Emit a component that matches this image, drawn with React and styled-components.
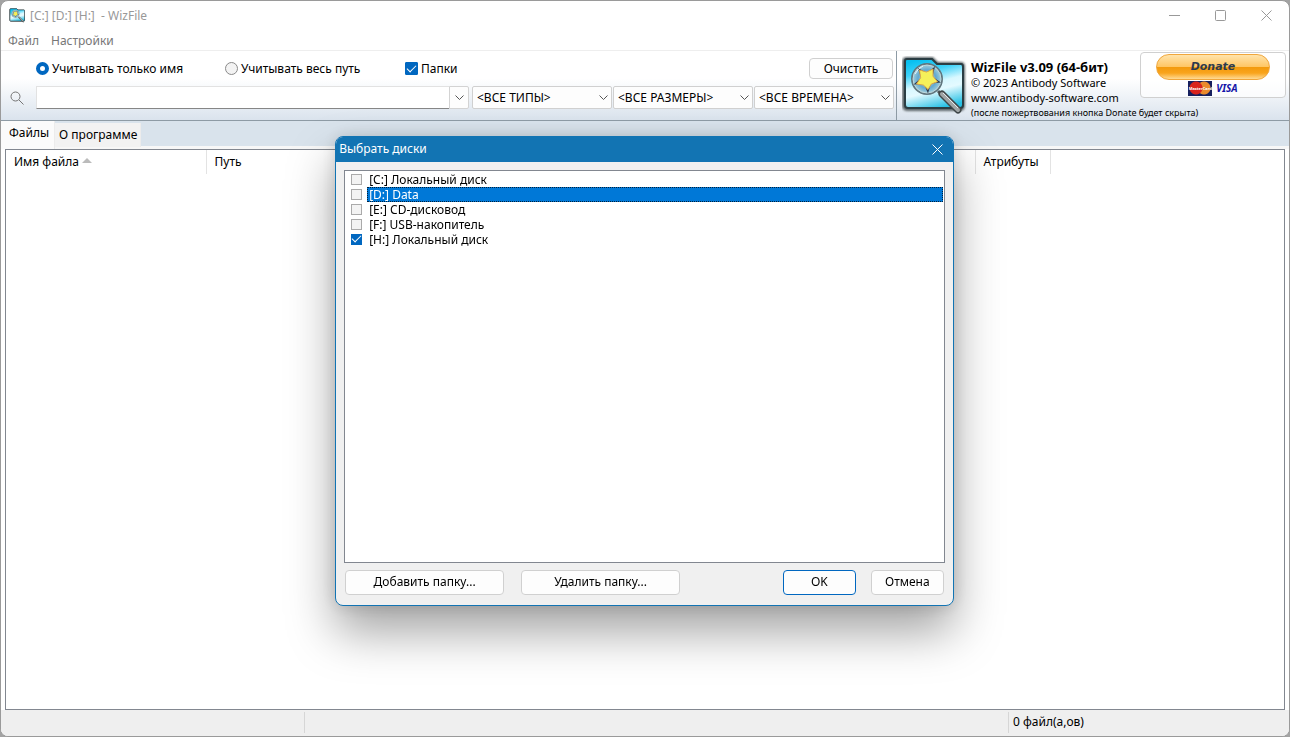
import React, { useState } from "react";
import styled, { createGlobalStyle } from "styled-components";

const FILTERS = [
  { id: "types", label: "Типы", value: "<ВСЕ ТИПЫ>" },
  { id: "sizes", label: "Размеры", value: "<ВСЕ РАЗМЕРЫ>" },
  { id: "times", label: "Времена", value: "<ВСЕ ВРЕМЕНА>" },
];

const DRIVES = [
  { id: "C", name: "[C:] Локальный диск" },
  { id: "D", name: "[D:] Data" },
  { id: "E", name: "[E:] CD-дисковод" },
  { id: "F", name: "[F:] USB-накопитель" },
  { id: "H", name: "[H:] Локальный диск" },
];

function FolderLogo({ width, height }) {
  return (
    <svg width={width} height={height} viewBox="0 0 66 60" aria-hidden="true">
      <defs>
        <linearGradient id="folder" x1="0.3" y1="0" x2="0.6" y2="1">
          <stop offset="0" stopColor="#08c0f0" />
          <stop offset="0.25" stopColor="#3fd2f8" />
          <stop offset="0.5" stopColor="#d8f8ff" />
          <stop offset="0.65" stopColor="#e4faff" />
          <stop offset="1" stopColor="#27c0e4" />
        </linearGradient>
        <radialGradient id="lens">
          <stop offset="0" stopColor="#cfeaf2" />
          <stop offset="0.6" stopColor="#62a8d0" />
          <stop offset="1" stopColor="#a9d3dc" />
        </radialGradient>
        <filter id="soft" x="-10%" y="-10%" width="120%" height="120%">
          <feGaussianBlur stdDeviation="1" />
        </filter>
      </defs>
      <path d="M5 3h25l5 5h24q2 0 2 3v38q0 4-3 4H6q-4 0-4-4V6q0-3 3-3z" fill="none" stroke="#5f686b" strokeWidth="4" filter="url(#soft)" />
      <path d="M5 3h25l5 5h24q2 0 2 3v38q0 3-3 3H6q-3 0-3-3V5q0-2 2-2z" fill="url(#folder)" stroke="#2b3d43" strokeWidth="2" />
      <path d="M36 35l4 4" stroke="#50585a" strokeWidth="3" />
      <path d="M40 38l16 16" stroke="#3f4648" strokeWidth="7" strokeLinecap="round" />
      <path d="M40 38l16 16" stroke="#a0a5a6" strokeWidth="4" strokeLinecap="round" />
      <path d="M41 37l15 15" stroke="#e4e8e8" strokeWidth="1" />
      <circle cx="25" cy="23" r="15" fill="url(#lens)" stroke="#61767e" strokeWidth="2" />
      <circle cx="25" cy="23" r="14" fill="none" stroke="#bfd8dd" strokeWidth="1" />
      <path d="M26 37.5L21.9 28.1 11.5 28.5 19.2 21.7 15.5 11.5 24.5 17 33 10.5 30.5 20.7 39 26.5 28.9 27.5z" fill="#2f3c50" />
      <path d="M26 33.5L21.4 29.1 14.5 28 18.6 21.7 17.5 14 24.5 16 31 13 31 20.2 35.5 25.7 29.4 28z" fill="#f5f05a" stroke="#d8a54e" strokeWidth="1" strokeLinejoin="round" />
      <path d="M13 18q3-6 8-8" fill="none" stroke="#e6f8fc" strokeWidth="1" />
    </svg>
  );
}

function Chevron() {
  return (
    <ChevronIcon viewBox="0 0 9 5" aria-hidden="true">
      <path d="M.5.5l4 4 4-4" />
    </ChevronIcon>
  );
}

function App() {
  const [matchMode, setMatchMode] = useState("name");
  const [folders, setFolders] = useState(true);
  const [query, setQuery] = useState("");
  const [tab, setTab] = useState("files");
  const [dialogOpen, setDialogOpen] = useState(true);
  const [selected, setSelected] = useState("D");
  const [checked, setChecked] = useState(["H"]);

  const toggleDrive = (id) => {
    setSelected(id);
    setChecked((prev) =>
      prev.includes(id) ? prev.filter((item) => item !== id) : [...prev, id]
    );
  };

  return (
    <>
      <GlobalStyle />
      <Window>
        <TitleBar>
          <FolderLogo width={17} height={15} />
          <Title>[C:] [D:] [H:]&nbsp; - WizFile</Title>
          <WindowButton aria-label="Свернуть">
            <svg width="11" height="11" viewBox="0 0 11 11"><path d="M0 5.5h11" /></svg>
          </WindowButton>
          <WindowButton aria-label="Развернуть">
            <svg width="11" height="11" viewBox="0 0 11 11"><rect x=".5" y=".5" width="10" height="10" rx="1" /></svg>
          </WindowButton>
          <WindowButton aria-label="Закрыть">
            <svg width="11" height="11" viewBox="0 0 11 11"><path d="M.5.5l10 10M10.5.5l-10 10" /></svg>
          </WindowButton>
        </TitleBar>
        <Menu>
          <MenuItem>Файл</MenuItem>
          <MenuItem>Настройки</MenuItem>
        </Menu>

        <Toolbar>
          <SearchPanel>
            <OptionsRow>
              <Option $width="189px">
                <Radio name="match" checked={matchMode === "name"} onChange={() => setMatchMode("name")} />
                Учитывать только имя
              </Option>
              <Option $width="180px">
                <Radio name="match" checked={matchMode === "path"} onChange={() => setMatchMode("path")} />
                Учитывать весь путь
              </Option>
              <Option>
                <CheckBox checked={folders} onChange={() => setFolders(!folders)} />
                Папки
              </Option>
              <ClearButton onClick={() => setQuery("")}>Очистить</ClearButton>
            </OptionsRow>
            <SearchRow>
              <SearchIcon width="14" height="14" viewBox="0 0 14 14" aria-hidden="true">
                <circle cx="5.5" cy="5.5" r="4.5" />
                <path d="M9 9l4.5 4.5" />
              </SearchIcon>
              <SearchBox>
                <SearchInput aria-label="Поиск" value={query} onChange={(e) => setQuery(e.target.value)} />
                <HistoryButton aria-label="История поиска"><Chevron /></HistoryButton>
              </SearchBox>
              <Filters>
                {FILTERS.map((filter) => (
                  <SelectWrap key={filter.id}>
                    <Select aria-label={filter.label}>
                      <option>{filter.value}</option>
                    </Select>
                    <SelectArrow><Chevron /></SelectArrow>
                  </SelectWrap>
                ))}
              </Filters>
            </SearchRow>
          </SearchPanel>

          <AboutPanel>
            <FolderLogo width={66} height={60} />
            <AboutText>
              <ProductName>WizFile v3.09 (64-бит)</ProductName>
              <AboutLine>© 2023 Antibody Software</AboutLine>
              <AboutLink href="#site">www.antibody-software.com</AboutLink>
              <SmallNote>(после пожертвования кнопка Donate будет скрыта)</SmallNote>
            </AboutText>
            <DonateButton>
              <DonatePill>Donate</DonatePill>
              <Cards>
                <MasterCard>MasterCard</MasterCard>
                <Visa>VISA</Visa>
              </Cards>
            </DonateButton>
          </AboutPanel>
        </Toolbar>

        <Tabs role="tablist">
          <Tab role="tab" aria-selected={tab === "files"} $active={tab === "files"} onClick={() => setTab("files")}>
            Файлы
          </Tab>
          <Tab role="tab" aria-selected={tab === "about"} $active={tab === "about"} onClick={() => setTab("about")}>
            О программе
          </Tab>
        </Tabs>

        <FileList>
          <FileTable>
            <thead>
              <tr>
                <HeadCell $width="200px">Имя файла <SortMark /></HeadCell>
                <HeadCell>Путь</HeadCell>
                <HeadCell $width="75px">Атрибуты</HeadCell>
                <BlankCell />
              </tr>
            </thead>
          </FileTable>
        </FileList>

        <StatusBar>
          <StatusCell $width="299px" />
          <StatusCell $grow />
          <StatusCell $width="277px">0 файл(а,ов)</StatusCell>
        </StatusBar>
      </Window>

      {dialogOpen && (
        <Overlay>
          <Dialog role="dialog" aria-labelledby="dialog-title">
            <DialogHeader>
              <DialogTitle id="dialog-title">Выбрать диски</DialogTitle>
              <DialogClose aria-label="Закрыть" onClick={() => setDialogOpen(false)}>
                <svg width="11" height="11" viewBox="0 0 11 11"><path d="M.5.5l10 10M10.5.5l-10 10" /></svg>
              </DialogClose>
            </DialogHeader>
            <DriveList>
              {DRIVES.map((drive) => (
                <DriveRow key={drive.id}>
                  <CheckBox $small checked={checked.includes(drive.id)} onChange={() => toggleDrive(drive.id)} />
                  <DriveName $selected={drive.id === selected}>{drive.name}</DriveName>
                </DriveRow>
              ))}
            </DriveList>
            <DialogButtons>
              <DialogButton $width="159px">Добавить папку...</DialogButton>
              <DialogButton $width="159px">Удалить папку...</DialogButton>
              <ConfirmButtons>
                <DialogButton $width="73px" $primary onClick={() => setDialogOpen(false)}>OK</DialogButton>
                <DialogButton $width="73px" onClick={() => setDialogOpen(false)}>Отмена</DialogButton>
              </ConfirmButtons>
            </DialogButtons>
          </Dialog>
        </Overlay>
      )}
    </>
  );
}

export default App;


const GlobalStyle = createGlobalStyle`
  * {
    box-sizing: border-box;
  }
  body {
    margin: 0;
    background: #a3a3a3;
    color: #000;
    font-family: "Noto Sans", "Open Sans", sans-serif;
    font-size: 12px;
    line-height: 16px;
  }
  button, input, select {
    margin: 0;
    font: inherit;
    color: inherit;
  }
`;

const Window = styled.main`
  min-height: 100vh;
  display: flex;
  flex-direction: column;
  background: #fff;
  border: 1px solid #9a9a9a;
  border-radius: 8px;
  overflow: hidden;
`;

const TitleBar = styled.header`
  height: 29px;
  padding-left: 8px;
  display: flex;
  align-items: center;
  color: #999;
`;

const Title = styled.span`
  flex: 1;
  margin-left: 4px;
`;

const WindowButton = styled.button`
  width: 46px;
  height: 29px;
  display: flex;
  align-items: center;
  justify-content: center;
  border: 0;
  background: none;
  svg {
    fill: none;
    stroke: #999;
  }
`;

const Menu = styled.nav`
  height: 21px;
  padding: 2px 0 0 7px;
  display: flex;
  align-items: center;
  gap: 12px;
  border-bottom: 1px solid #eee;
`;

const MenuItem = styled.button`
  padding: 0;
  border: 0;
  background: none;
  color: #777;
`;

const Toolbar = styled.section`
  height: 70px;
  display: flex;
  background: linear-gradient(#fff 0%, #fff 40%, #dae3ed 100%);
  border-bottom: 1px solid #8e9ba5;
`;

const SearchPanel = styled.div`
  flex: 1;
  min-width: 0;
  padding: 7px 2px 0 0;
  border-right: 1px solid #8e9ba5;
`;

const OptionsRow = styled.div`
  display: flex;
  align-items: center;
  height: 21px;
  padding-left: 35px;
`;

const Option = styled.label`
  width: ${({ $width }) => $width || "auto"};
  display: flex;
  align-items: center;
  gap: 3px;
  white-space: nowrap;
`;

const Radio = styled.input.attrs({ type: "radio" })`
  appearance: none;
  width: 13px;
  height: 13px;
  border: 1px solid #8a8a8a;
  border-radius: 50%;
  background: #f3f3f3;
  &:checked {
    border: 4px solid #0067c0;
    background: #fff;
  }
`;

const CheckBox = styled.input.attrs({ type: "checkbox" })`
  appearance: none;
  flex: none;
  width: ${({ $small }) => ($small ? "11px" : "13px")};
  height: ${({ $small }) => ($small ? "11px" : "13px")};
  display: flex;
  align-items: center;
  justify-content: center;
  border: 1px solid ${({ $small }) => ($small ? "#aaa" : "#8a8a8a")};
  border-radius: ${({ $small }) => ($small ? "0" : "1px")};
  background: #f3f3f3;
  &:checked {
    border-color: #0067c0;
    background: #0067c0;
  }
  &:checked::after {
    content: "";
    width: 8px;
    height: 4px;
    margin-bottom: 3px;
    border: solid #fff;
    border-width: 0 0 1px 1px;
    rotate: -45deg;
  }
`;

const Button = styled.button`
  padding: 0;
  border: 1px solid #d0d0d0;
  border-radius: 4px;
  background: #fdfdfd;
`;

const ClearButton = styled(Button)`
  width: 84px;
  height: 21px;
  margin: 0 1px 0 auto;
`;

const SearchRow = styled.div`
  display: flex;
  align-items: center;
  margin-top: 7px;
  padding-left: 9px;
`;

const SearchIcon = styled.svg`
  flex: none;
  margin-right: 12px;
  fill: none;
  stroke: #757575;
`;

const SearchBox = styled.div`
  flex: 1;
  min-width: 0;
  height: 23px;
  display: flex;
`;

const SearchInput = styled.input`
  flex: 1;
  min-width: 0;
  padding: 0 4px;
  border: 1px solid #e2e2e2;
  border-right: 0;
  border-bottom-color: #868686;
  background: #fff;
`;

const HistoryButton = styled.button`
  width: 20px;
  padding: 0;
  display: flex;
  align-items: center;
  justify-content: center;
  border: 1px solid #d3d3d3;
  border-radius: 0 2px 2px 0;
  background: #fdfdfd;
`;

const Filters = styled.div`
  display: flex;
  gap: 1px;
  margin-left: 3px;
`;

const SelectWrap = styled.div`
  position: relative;
  width: 140px;
`;

const Select = styled.select`
  appearance: none;
  display: block;
  width: 100%;
  height: 23px;
  padding: 0 20px 0 4px;
  border: 1px solid #d0d0d0;
  border-radius: 2px;
  background: #fdfdfd;
`;

const SelectArrow = styled.span`
  position: absolute;
  top: 0;
  right: 4px;
  height: 100%;
  display: flex;
  align-items: center;
  pointer-events: none;
`;

const ChevronIcon = styled.svg`
  width: 9px;
  height: 5px;
  fill: none;
  stroke: #555;
`;

const AboutPanel = styled.div`
  width: 392px;
  padding-left: 5px;
  display: flex;
  align-items: flex-start;
  > svg {
    flex: none;
    margin-top: 5px;
  }
`;

const AboutText = styled.div`
  flex: 1;
  min-width: 0;
  display: flex;
  flex-direction: column;
  padding: 8px 0 0 3px;
  white-space: nowrap;
`;

const ProductName = styled.strong`
  font-size: 13px;
`;

const AboutLine = styled.span`
  font-size: 11px;
`;

const AboutLink = styled.a`
  line-height: 14px;
  font-size: 11px;
  color: inherit;
  text-decoration: none;
`;

const SmallNote = styled.small`
  font-size: 9px;
`;

const DonateButton = styled(Button)`
  width: 146px;
  height: 46px;
  margin: 1px 3px 0 0;
  display: flex;
  flex-direction: column;
  align-items: center;
  background: rgba(255, 255, 255, 0.7);
`;

const DonatePill = styled.span`
  width: 114px;
  height: 26px;
  margin-top: 1px;
  border: 1px solid #f0a63b;
  border-radius: 13px;
  background: linear-gradient(#ffe3ab, #ffc562 50%, #f39a0c 51%, #f9a41c 75%, #ffda93);
  color: #2d3a4d;
  font-family: "DejaVu Sans", sans-serif;
  font-size: 11px;
  font-style: italic;
  font-weight: bold;
  line-height: 24px;
`;

const Cards = styled.span`
  display: flex;
  align-items: center;
  gap: 4px;
`;

const MasterCard = styled.span`
  width: 24px;
  height: 15px;
  overflow: hidden;
  background:
    radial-gradient(circle at 8px 7px, #d9231d 6px, transparent 7px),
    radial-gradient(circle at 16px 7px, #ea8a2c 6px, transparent 7px),
    #17205e;
  color: #fff;
  font-size: 4px;
  font-weight: bold;
  line-height: 15px;
`;

const Visa = styled.span`
  color: #1414a8;
  font-size: 10px;
  font-style: italic;
  font-weight: bold;
`;

const Tabs = styled.div`
  height: 28px;
  display: flex;
  align-items: flex-start;
  background: linear-gradient(#d9e3ec 25px, #f7f7f7 25px);
`;

const Tab = styled.button`
  height: ${({ $active }) => ($active ? "28px" : "24px")};
  margin-top: ${({ $active }) => ($active ? "0" : "2px")};
  padding: ${({ $active }) => ($active ? "0 5px 4px 8px" : "0 3px 0 4px")};
  border: 0;
  border-right: 1px solid #ececec;
  background: ${({ $active }) => ($active ? "#fbfbfb" : "#f2f2f2")};
`;

const FileList = styled.section`
  flex: 1;
  margin: 0 4px;
  border: 1px solid #828790;
  background: #fff;
`;

const FileTable = styled.table`
  width: 100%;
  table-layout: fixed;
  border-collapse: collapse;
`;

const HeadCell = styled.th`
  width: ${({ $width }) => $width || "auto"};
  height: 24px;
  padding: 0 0 0 8px;
  border-right: 1px solid #e3e3e3;
  font-weight: normal;
  text-align: left;
  white-space: nowrap;
`;

const BlankCell = styled.td`
  width: 234px;
`;

const SortMark = styled.span`
  display: inline-block;
  margin-bottom: 3px;
  border: 5px solid transparent;
  border-top: 0;
  border-bottom-color: #bbb;
`;

const StatusBar = styled.footer`
  height: 26px;
  padding: 2px 4px 3px;
  display: flex;
  background: #efefef;
`;

const StatusCell = styled.div`
  flex: ${({ $grow }) => ($grow ? "1" : "none")};
  width: ${({ $width }) => $width || "auto"};
  padding: 2px 4px;
  & + & {
    border-left: 1px solid #d6d6d6;
  }
`;

/* the dialog floats above the window, slightly below its centre */
const Overlay = styled.div`
  position: fixed;
  inset: 0;
  padding: 4px 1px 0 0;
  display: flex;
  align-items: center;
  justify-content: center;
`;

const Dialog = styled.section`
  width: 48%;
  height: 470px;
  display: flex;
  flex-direction: column;
  border: 1px solid #1274b3;
  border-radius: 8px;
  background: #f0f0f0;
  box-shadow: 0 26px 48px rgba(0, 0, 0, 0.36), 0 0 16px rgba(0, 0, 0, 0.14);
  overflow: hidden;
`;

const DialogHeader = styled.header`
  height: 25px;
  padding-left: 3px;
  display: flex;
  align-items: center;
  background: #1274b3;
  color: #fff;
`;

const DialogTitle = styled.h1`
  flex: 1;
  margin: 0;
  font-size: 12px;
  font-weight: normal;
`;

const DialogClose = styled.button`
  width: 30px;
  height: 25px;
  padding: 0;
  display: flex;
  align-items: center;
  justify-content: center;
  border: 0;
  background: none;
  svg {
    stroke: #fff;
  }
`;

const DriveList = styled.div`
  flex: 1;
  margin: 8px 8px 0;
  padding: 1px;
  border: 1px solid #828790;
  background: #fff;
`;

const DriveRow = styled.label`
  height: 15px;
  padding-left: 5px;
  display: flex;
  align-items: center;
  gap: 5px;
`;

const DriveName = styled.span`
  flex: 1;
  height: 15px;
  padding-left: 1px;
  line-height: 13px;
  border: 1px ${({ $selected }) => ($selected ? "dotted #00203c" : "solid transparent")};
  background: ${({ $selected }) => ($selected ? "#0078d7" : "none")};
  color: ${({ $selected }) => ($selected ? "#fff" : "inherit")};
`;

const DialogButtons = styled.footer`
  padding: 7px 9px 10px;
  display: flex;
  gap: 17px;
`;

const ConfirmButtons = styled.div`
  margin-left: auto;
  display: flex;
  gap: 15px;
`;

const DialogButton = styled(Button)`
  width: ${({ $width }) => $width};
  height: 25px;
  border-color: ${({ $primary }) => ($primary ? "#0067c0" : "#d0d0d0")};
`;
